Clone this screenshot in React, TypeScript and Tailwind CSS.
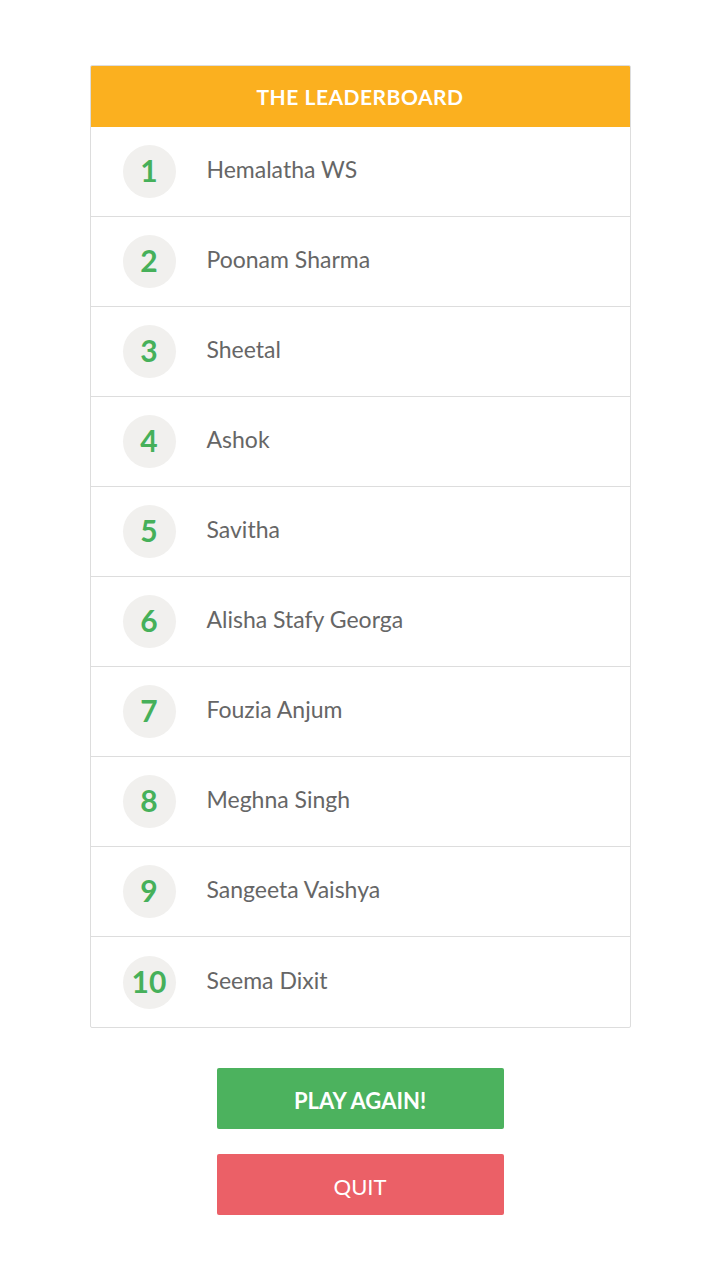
const players = [
  'Hemalatha WS',
  'Poonam Sharma',
  'Sheetal',
  'Ashok',
  'Savitha',
  'Alisha Stafy Georga',
  'Fouzia Anjum',
  'Meghna Singh',
  'Sangeeta Vaishya',
  'Seema Dixit',
];

export default function App() {
  return (
    <div className="min-h-screen bg-white pt-[65px] font-['Lato','Noto_Sans',sans-serif]">
      {/* Leaderboard card */}
      <div className="mx-auto w-[541px] border border-[#dddddd] rounded-[2px] overflow-hidden">
        <div className="h-[61px] bg-[#fbb01f] flex items-center justify-center">
          <span className="text-white font-bold text-[21px] tracking-[0.5px]">THE LEADERBOARD</span>
        </div>
        {players.map((name, i) => (
          <div key={name} className="h-[90px] flex items-center pl-[32px] border-b border-[#dddddd] last:border-b-0">
            <div className="w-[53px] h-[53px] rounded-full bg-[#f1f0ee] flex items-center justify-center">
              <span className="-mt-[3px] text-[#46b05a] font-bold text-[30px] leading-none">{i + 1}</span>
            </div>
            <span className="ml-[31px] -mt-[4px] text-[#666666] text-[23px]">{name}</span>
          </div>
        ))}
      </div>

      {/* Actions */}
      <div className="mt-[40px] flex flex-col items-center gap-[25px]">
        <button className="w-[287px] h-[61px] pt-[3px] rounded-[2px] bg-[#4cb25e] text-white font-bold text-[22px]">
          PLAY AGAIN!
        </button>
        <button className="w-[287px] h-[61px] pt-[3px] rounded-[2px] bg-[#eb6067] text-white text-[22px]">
          QUIT
        </button>
      </div>
    </div>
  );
}
